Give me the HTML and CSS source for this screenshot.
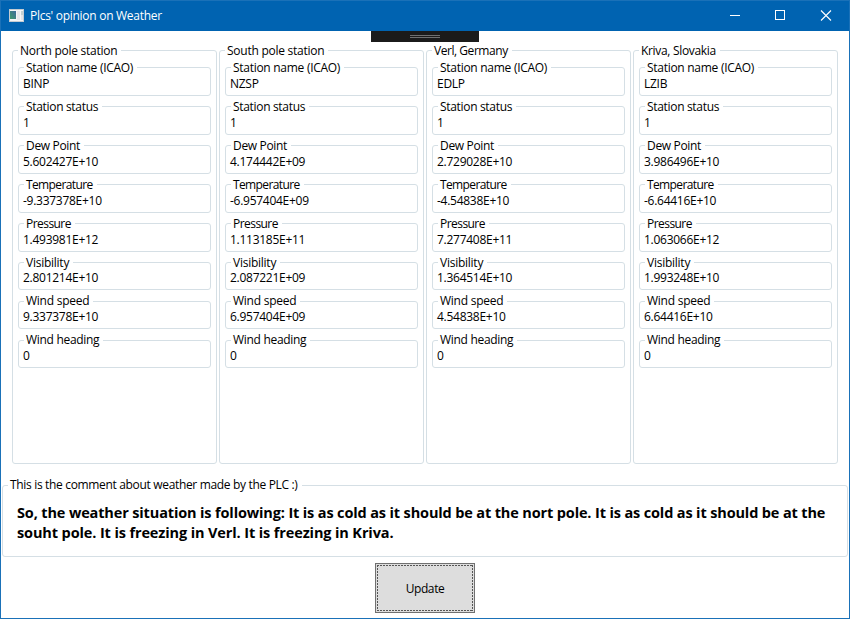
FILE: index.html
```html
<!DOCTYPE html>
<html lang="en">
<head>
<meta charset="utf-8">
<title>Plcs' opinion on Weather</title>
<link rel="stylesheet" href="styles.css">
</head>
<body>
<div class="window">
  <header class="titlebar">
    <svg class="app-icon" width="15" height="13" viewBox="0 0 15 13" shape-rendering="crispEdges">
      <defs>
        <linearGradient id="pane" x1="0" y1="1" x2="1" y2="0">
          <stop offset="0" stop-color="#3f9a6c"/>
          <stop offset="1" stop-color="#3f6a9c"/>
        </linearGradient>
      </defs>
      <rect width="15" height="13" fill="#c3cbd2"/>
      <rect x="1" y="1" width="13" height="11" fill="#f4f5f6"/>
      <rect x="1" y="2" width="6" height="8" fill="url(#pane)"/>
      <rect x="8" y="2" width="3" height="9" fill="#e6e7ea"/>
      <rect x="12" y="2" width="2" height="4" fill="#c3d0d2"/>
      <rect x="12" y="6" width="2" height="5" fill="#e3e5e8"/>
    </svg>
    <span class="title">Plcs' opinion on Weather</span>
    <svg class="caption" width="102" height="11" viewBox="0 0 102 11" fill="none" stroke="#fff">
      <path d="M0 5.500h10M45.500 .500h9v9h-9z" shape-rendering="crispEdges"/>
      <path d="M91 .500l10 10M101 .500l-10 10" stroke-width="1.100"/>
    </svg>
  </header>
  <div class="debug-bar"><span class="grip"></span></div>
  <main class="stations">
    <section class="group station">
      <h2 class="legend north">North pole station</h2>
      <div class="fields">
        <div class="group field"><span class="legend icao">Station name (ICAO)</span><span class="value">BINP</span></div>
        <div class="group field"><span class="legend status">Station status</span><span class="value">1</span></div>
        <div class="group field"><span class="legend dew">Dew Point</span><span class="value">5.602427E+10</span></div>
        <div class="group field"><span class="legend temp">Temperature</span><span class="value">-9.337378E+10</span></div>
        <div class="group field"><span class="legend pressure">Pressure</span><span class="value">1.493981E+12</span></div>
        <div class="group field short"><span class="legend visibility">Visibility</span><span class="value">2.801214E+10</span></div>
        <div class="group field short"><span class="legend wind">Wind speed</span><span class="value">9.337378E+10</span></div>
        <div class="group field short"><span class="legend heading">Wind heading</span><span class="value">0</span></div>
      </div>
    </section>
    <section class="group station">
      <h2 class="legend south">South pole station</h2>
      <div class="fields">
        <div class="group field"><span class="legend icao">Station name (ICAO)</span><span class="value">NZSP</span></div>
        <div class="group field"><span class="legend status">Station status</span><span class="value">1</span></div>
        <div class="group field"><span class="legend dew">Dew Point</span><span class="value">4.174442E+09</span></div>
        <div class="group field"><span class="legend temp">Temperature</span><span class="value">-6.957404E+09</span></div>
        <div class="group field"><span class="legend pressure">Pressure</span><span class="value">1.113185E+11</span></div>
        <div class="group field short"><span class="legend visibility">Visibility</span><span class="value">2.087221E+09</span></div>
        <div class="group field short"><span class="legend wind">Wind speed</span><span class="value">6.957404E+09</span></div>
        <div class="group field short"><span class="legend heading">Wind heading</span><span class="value">0</span></div>
      </div>
    </section>
    <section class="group station">
      <h2 class="legend verl">Verl, Germany</h2>
      <div class="fields">
        <div class="group field"><span class="legend icao">Station name (ICAO)</span><span class="value">EDLP</span></div>
        <div class="group field"><span class="legend status">Station status</span><span class="value">1</span></div>
        <div class="group field"><span class="legend dew">Dew Point</span><span class="value">2.729028E+10</span></div>
        <div class="group field"><span class="legend temp">Temperature</span><span class="value">-4.54838E+10</span></div>
        <div class="group field"><span class="legend pressure">Pressure</span><span class="value">7.277408E+11</span></div>
        <div class="group field short"><span class="legend visibility">Visibility</span><span class="value">1.364514E+10</span></div>
        <div class="group field short"><span class="legend wind">Wind speed</span><span class="value">4.54838E+10</span></div>
        <div class="group field short"><span class="legend heading">Wind heading</span><span class="value">0</span></div>
      </div>
    </section>
    <section class="group station">
      <h2 class="legend kriva">Kriva, Slovakia</h2>
      <div class="fields">
        <div class="group field"><span class="legend icao">Station name (ICAO)</span><span class="value">LZIB</span></div>
        <div class="group field"><span class="legend status">Station status</span><span class="value">1</span></div>
        <div class="group field"><span class="legend dew">Dew Point</span><span class="value">3.986496E+10</span></div>
        <div class="group field"><span class="legend temp">Temperature</span><span class="value">-6.64416E+10</span></div>
        <div class="group field"><span class="legend pressure">Pressure</span><span class="value">1.063066E+12</span></div>
        <div class="group field short"><span class="legend visibility">Visibility</span><span class="value">1.993248E+10</span></div>
        <div class="group field short"><span class="legend wind">Wind speed</span><span class="value">6.64416E+10</span></div>
        <div class="group field short"><span class="legend heading">Wind heading</span><span class="value">0</span></div>
      </div>
    </section>
  </main>
  <section class="group comment">
    <h2 class="legend note">This is the comment about weather made by the PLC :)</h2>
    <p class="message"><span class="line first">So, the weather situation is following: It is as cold as it should be at the nort pole. It is as cold as it should be at the</span> <span class="line second">souht pole. It is freezing in Verl. It is freezing in Kriva.</span></p>
  </section>
  <button class="update" type="button"><span class="focus">Update</span></button>
</div>
</body>
</html>
```
FILE: styles.css
```css
* { box-sizing: border-box; }

body {
  margin: 0;
  font: 12px/16px "Open Sans", "Noto Sans", sans-serif;
  letter-spacing: -0.25px;
  color: #000;
  background: #fff;
}

.window {
  display: flex;
  flex-direction: column;
  width: 850px;
  height: 619px;
  border: 1px solid #1a71b8;
}

.titlebar {
  display: flex;
  align-items: center;
  flex: none;
  height: 30px;
  padding: 0 17px 0 8px;
  background: #0063b1;
  color: #fff;
}

.app-icon { margin: -2px 6px 0 0; }
.title { letter-spacing: -0.28px; }
.caption { margin: -1px 0 0 auto; }

.debug-bar {
  flex: none;
  align-self: center;
  width: 108px;
  height: 11px;
  padding-top: 4px;
  background: #1b1b1b;
}

.grip {
  display: block;
  width: 30px;
  height: 3px;
  margin: 0 auto;
  border: solid #6f6f6f;
  border-width: 1px 0;
}

.group {
  display: flex;
  flex-direction: column;
  border: 1px solid #d5dfe5;
  border-radius: 3px;
}

.legend {
  align-self: flex-start;
  flex: none;
  height: 16px;
  margin: -8px 0 0 5px;
  padding: 0 4px 0 2px;
  background: #fff;
  font-size: inherit;
  font-weight: normal;
  white-space: nowrap;
}

.icao { letter-spacing: -0.28px; }
.status { letter-spacing: -0.32px; }
.dew { letter-spacing: -0.33px; }
.temp { letter-spacing: -0.62px; }
.pressure { letter-spacing: -0.55px; }
.heading { letter-spacing: -0.3px; }
.verl { letter-spacing: -0.45px; }
.kriva { letter-spacing: -0.32px; }

.stations {
  display: flex;
  gap: 2px;
  flex: none;
  margin: 8px 0 0 11px;
}

.station { width: 205px; height: 414px; }

.fields {
  display: flex;
  flex-direction: column;
  gap: 10px;
  padding: 8px 5px 0;
}

.field { height: 29px; }
.value { padding-left: 4px; letter-spacing: -0.27px; }

.field.short { height: 28px; }
.field.short .value { margin-top: -1px; }
.field.short + .short { margin-top: 1px; }
.field.short + .short .legend { margin-top: -9px; }
.field.short + .short .value { margin-top: 0; }

.comment {
  flex: none;
  width: 846px;
  height: 72px;
  margin: 21px 0 0 1px;
}

.note { margin-top: -9px; letter-spacing: -0.33px; }

.message {
  margin: 10px 0 0 14px;
  font-size: 14.5px;
  font-weight: bold;
  line-height: 20px;
}

.line { display: block; white-space: nowrap; }
.first { letter-spacing: -0.14px; }
.second { letter-spacing: -0.12px; }

.update {
  flex: none;
  align-self: center;
  width: 100px;
  height: 50px;
  margin-top: 6px;
  padding: 1px;
  border: 1px solid #707070;
  background: #ddd;
  color: #000;
  font: inherit;
  letter-spacing: -0.4px;
}

/* Dotted focus rectangle: 2px dashes with 1px gaps on all four sides */
.focus {
  display: flex;
  align-items: center;
  justify-content: center;
  height: 100%;
  padding-top: 2px;
  background:
    repeating-linear-gradient(90deg, #555 0 2px, transparent 2px 3px) top / 100% 1px no-repeat,
    repeating-linear-gradient(90deg, #555 0 2px, transparent 2px 3px) bottom / 100% 1px no-repeat,
    repeating-linear-gradient(180deg, #555 0 2px, transparent 2px 3px) left / 1px 100% no-repeat,
    repeating-linear-gradient(180deg, #555 0 2px, transparent 2px 3px) right / 1px 100% no-repeat;
}
```
